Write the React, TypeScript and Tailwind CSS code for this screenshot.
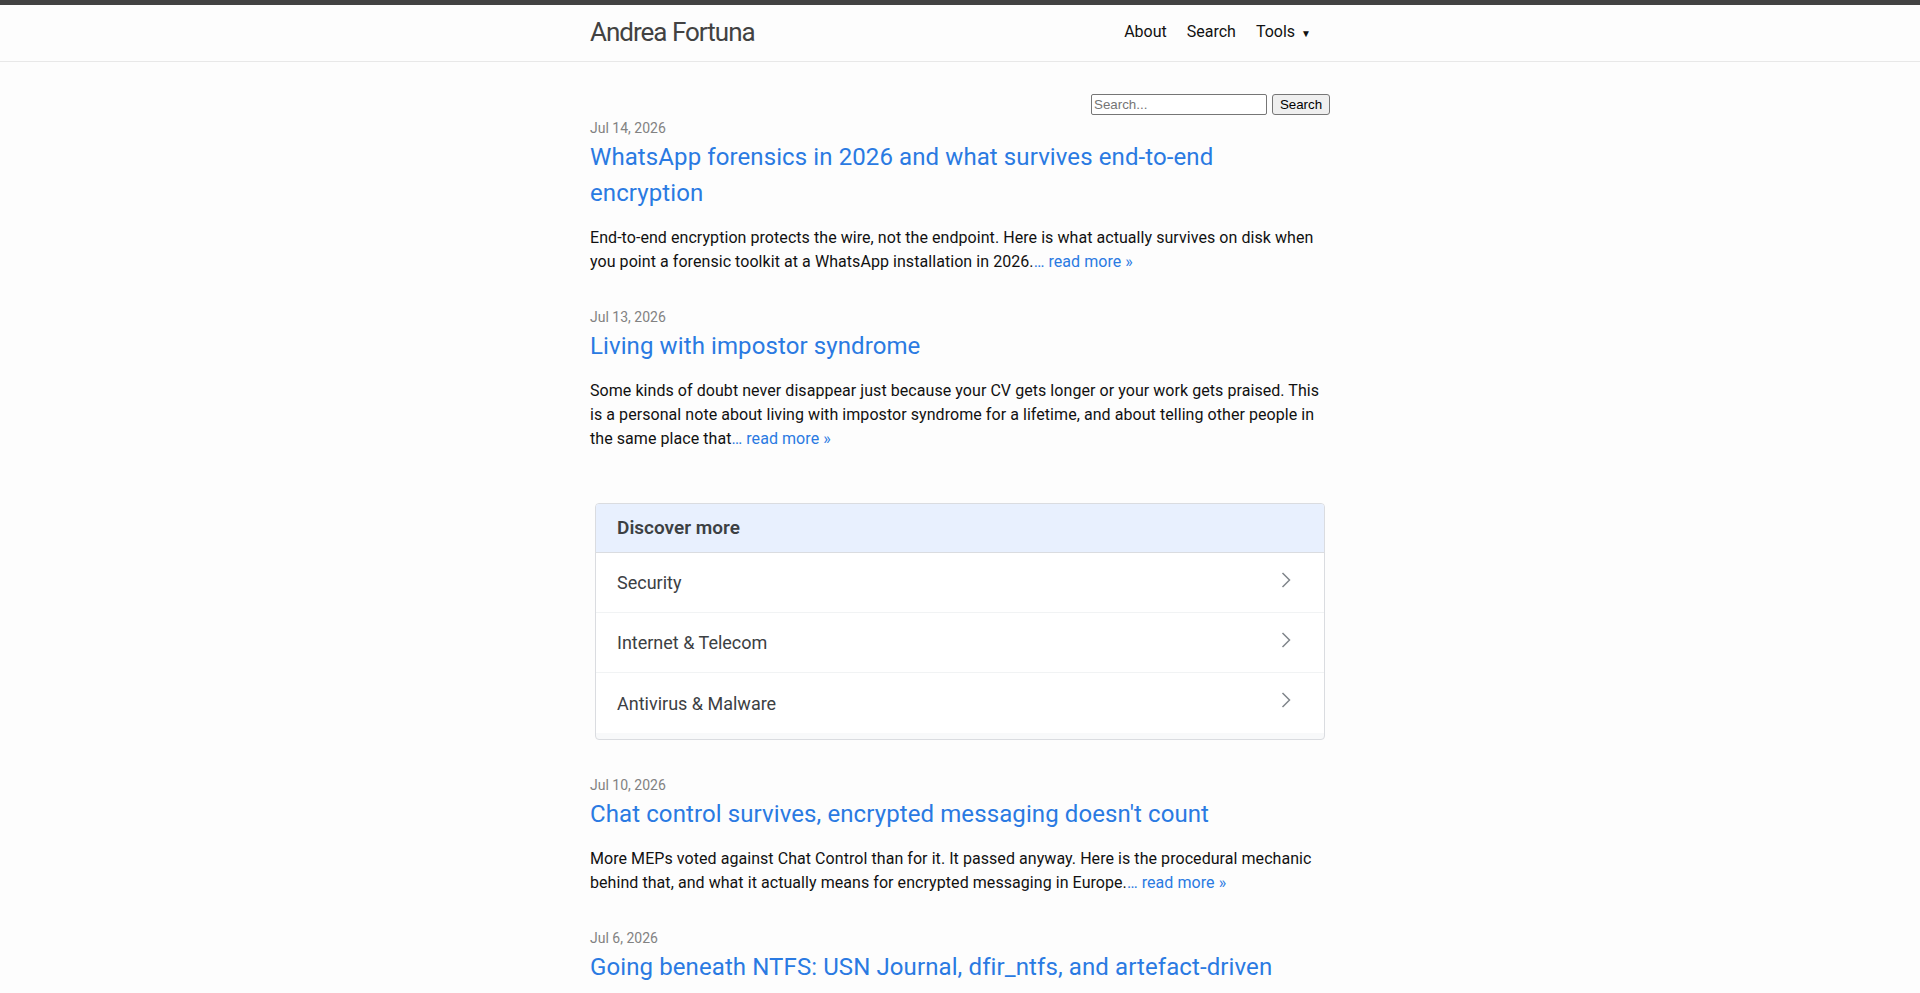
import { useState } from "react";

type Post = {
  date: string;
  title: string;
  excerpt: string;
};

const posts: Post[] = [
  {
    date: "Jul 14, 2026",
    title: "WhatsApp forensics in 2026 and what survives end-to-end encryption",
    excerpt:
      "End-to-end encryption protects the wire, not the endpoint. Here is what actually survives on disk when you point a forensic toolkit at a WhatsApp installation in 2026.",
  },
  {
    date: "Jul 13, 2026",
    title: "Living with impostor syndrome",
    excerpt:
      "Some kinds of doubt never disappear just because your CV gets longer or your work gets praised. This is a personal note about living with impostor syndrome for a lifetime, and about telling other people in the same place that",
  },
  {
    date: "Jul 10, 2026",
    title: "Chat control survives, encrypted messaging doesn't count",
    excerpt:
      "More MEPs voted against Chat Control than for it. It passed anyway. Here is the procedural mechanic behind that, and what it actually means for encrypted messaging in Europe.",
  },
  {
    date: "Jul 6, 2026",
    title: "Going beneath NTFS: USN Journal, dfir_ntfs, and artefact-driven timeline analysis",
    excerpt:
      "The MFT tells you what a volume looks like now. The USN Journal tells you how it got there. A walk through parsing change records and turning them into a usable timeline.",
  },
];

const topics = ["Security", "Internet & Telecom", "Antivirus & Malware"];

function Chevron() {
  return (
    <svg width="10" height="16" viewBox="0 0 10 16" fill="none" className="shrink-0 mb-[6px]">
      <polyline points="1.5,1 8.5,8 1.5,15" stroke="#80868b" strokeWidth="1.5" strokeLinejoin="miter" />
    </svg>
  );
}

function Header() {
  return (
    <header className="border-t-[5px] border-b border-t-[#424242] border-b-[#e8e8e8] min-h-[55.95px]">
      <div className="mx-auto max-w-[800px] px-[30px] flex justify-between">
        <a href="#" className="text-[26px] font-normal leading-[54px] tracking-[-1px] text-[#424242]">
          Andrea Fortuna
        </a>
        <nav className="flex leading-[54px] pr-[19px]">
          <a href="#" className="text-[#111]">About</a>
          <a href="#" className="ml-[20px] text-[#111]">Search</a>
          <a href="#" className="ml-[20px] text-[#111]">
            Tools<span className="ml-[6px] text-[10px] align-baseline">▼</span>
          </a>
        </nav>
      </div>
    </header>
  );
}

function SearchForm() {
  const [q, setQ] = useState("");
  return (
    <form className="flex justify-end items-start gap-[5px] h-[26px] pt-[2px] font-['Liberation_Sans',Arial,sans-serif] text-[13.33px]">
      <input
        value={q}
        onChange={(e) => setQ(e.target.value)}
        placeholder="Search..."
        className="w-[176px] h-[21px] px-[2px] bg-white border border-[#767676] rounded-[2px] text-black placeholder:text-[#757575] outline-none"
      />
      <button
        type="submit"
        className="w-[58px] h-[21px] bg-[#efefef] border border-[#767676] rounded-[3px] text-black"
      >
        Search
      </button>
    </form>
  );
}

function PostItem({ post }: { post: Post }) {
  return (
    <li className="mb-[33px]">
      <span className="block text-[14px] leading-[21px] text-[#828282]">{post.date}</span>
      <h3 className="mb-[15px] text-[24px] leading-[36px] font-normal tracking-[0.1px]">
        <a href="#" className="block text-[#2a7ae2]">{post.title}</a>
      </h3>
      <p className="text-[16px] leading-[24px] tracking-[0.06px] text-[#111]">
        {post.excerpt}
        <a href="#" className="text-[#2a7ae2]">… read more »</a>
      </p>
    </li>
  );
}

function DiscoverMore() {
  return (
    <div className="mx-[5px] mt-[52px] mb-[35px] border border-[#dadce0] rounded-[4px] overflow-hidden bg-[#f8f9fa]">
      <div className="h-[49px] flex items-center px-[21px] bg-[#e8f0fe] border-b border-[#dadce0]">
        <span className="text-[19px] font-semibold text-[#3c4043]">Discover more</span>
      </div>
      {topics.map((t, i) => (
        <a
          key={t}
          href="#"
          className={`h-[60px] flex items-center justify-between pl-[21px] pr-[33px] bg-white ${i < topics.length - 1 ? "border-b border-[#f1f3f4]" : ""}`}
        >
          <span className="text-[18px] text-[#3c4043]">{t}</span>
          <Chevron />
        </a>
      ))}
      <div className="h-[6px]" />
    </div>
  );
}

export default function App() {
  return (
    <div className="min-h-screen bg-[#fdfdfd] font-['Roboto',sans-serif] text-[16px] leading-[1.5] text-[#111]">
      <Header />
      <main className="mx-auto max-w-[800px] px-[30px] py-[30px]">
        <SearchForm />
        <ul className="list-none">
          <PostItem post={posts[0]} />
          <PostItem post={posts[1]} />
          <DiscoverMore />
          <PostItem post={posts[2]} />
          <PostItem post={posts[3]} />
        </ul>
      </main>
    </div>
  );
}
